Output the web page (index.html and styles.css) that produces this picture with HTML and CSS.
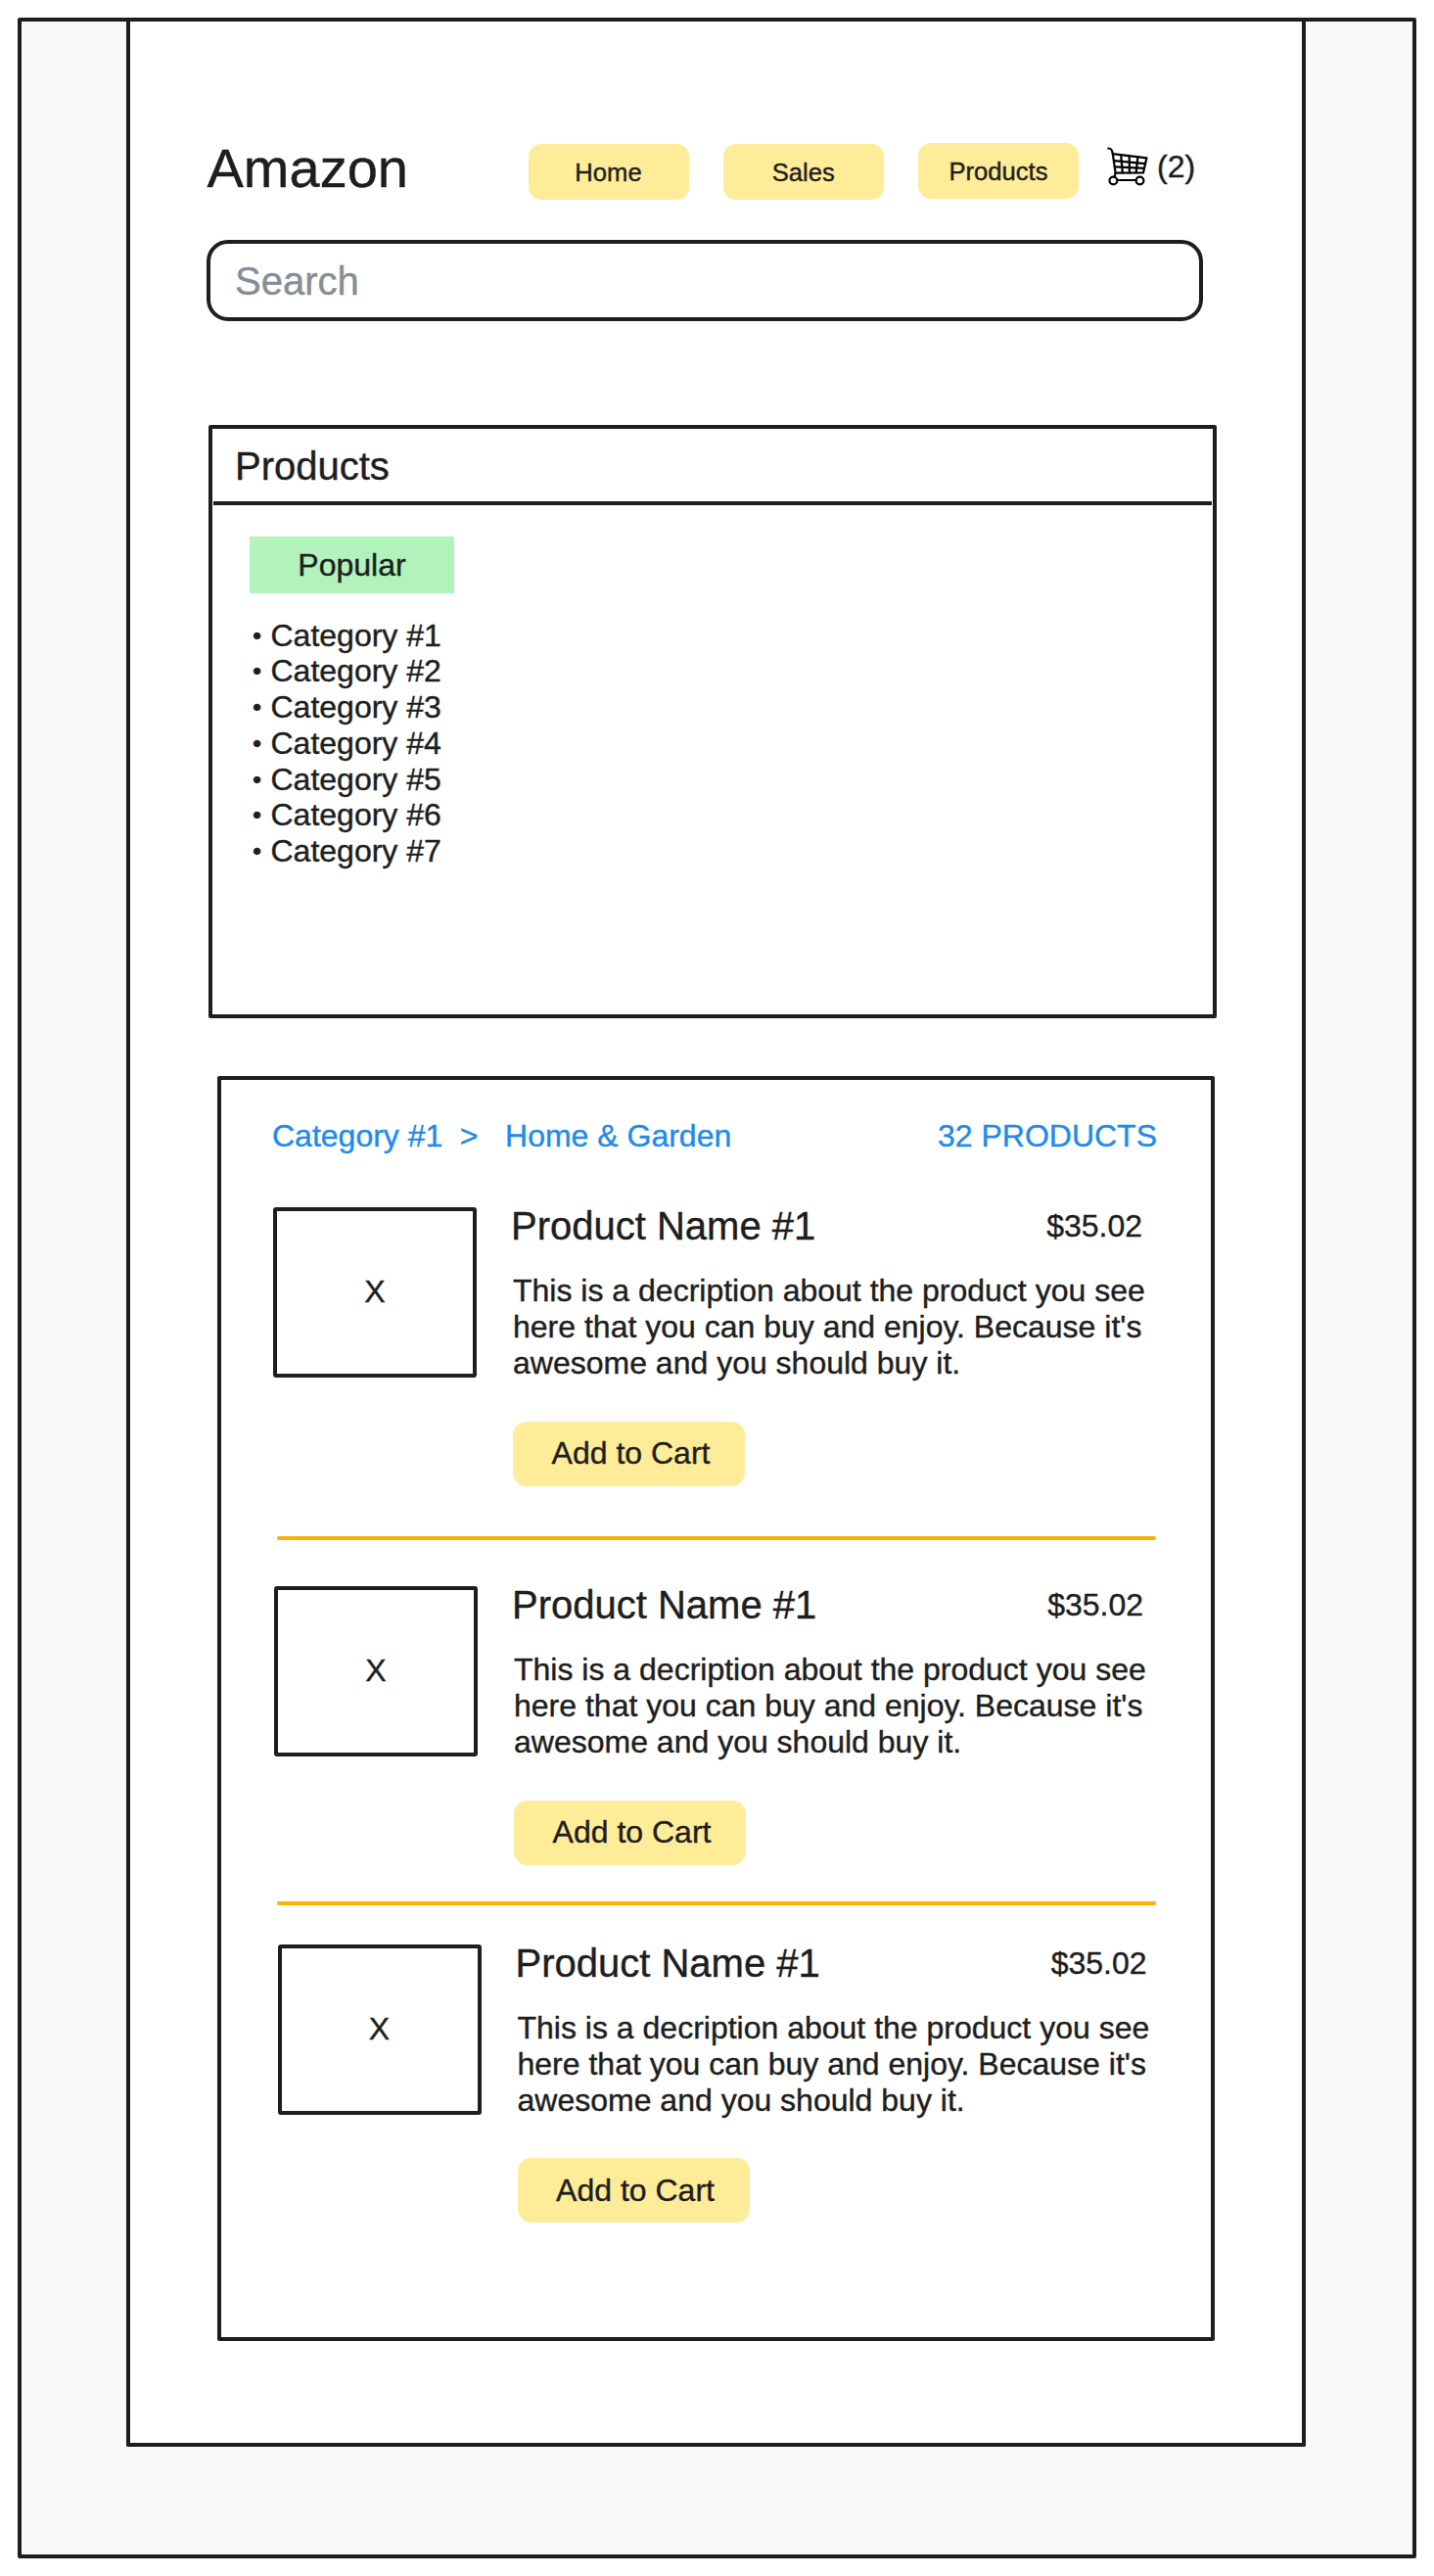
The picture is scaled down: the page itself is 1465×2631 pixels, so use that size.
FILE: index.html
```html
<!DOCTYPE html>
<html lang="en">
<head>
<meta charset="utf-8">
<title>Amazon</title>
<link rel="stylesheet" href="styles.css">
</head>
<body>
<div class="frame">
  <div class="page">
    <header class="header">
      <h1 class="brand">Amazon</h1>
      <nav class="nav">
        <a class="nav-link">Home</a>
        <a class="nav-link">Sales</a>
        <a class="nav-link nav-link-raised">Products</a>
      </nav>
      <div class="cart">
        <svg class="cart-icon" width="42" height="40" viewBox="0 0 42 40" fill="none" stroke="#000" stroke-width="2.2" stroke-linecap="round" stroke-linejoin="round">
          <path d="M1.2 1.5Q4 1.6 4.8 3.4L5.8 7L8.6 26.6L7.6 30.6"/>
          <path d="M5.8 7.2L40.4 11.4L37 26.4L8.6 26.6"/>
          <path d="M6.9 14.2L38.8 17.2M7.7 20.4L37.9 21.8"/>
          <path d="M14.2 8.4L15.8 26.4M22.7 9.4L22.9 26.4M31.4 10.4L29.6 26.4"/>
          <path d="M11 34H29.5" stroke-width="2"/>
          <circle cx="6.4" cy="34.5" r="3.9"/>
          <circle cx="33.5" cy="34.5" r="3.9"/>
        </svg>
        <span class="cart-count">(2)</span>
      </div>
    </header>

    <div class="search">Search</div>

    <section class="panel categories">
      <h2 class="categories-title">Products</h2>
      <div class="tag">Popular</div>
      <ul class="category-list">
        <li><span class="bullet">•</span>Category #1</li>
        <li><span class="bullet">•</span>Category #2</li>
        <li><span class="bullet">•</span>Category #3</li>
        <li><span class="bullet">•</span>Category #4</li>
        <li><span class="bullet">•</span>Category #5</li>
        <li><span class="bullet">•</span>Category #6</li>
        <li><span class="bullet">•</span>Category #7</li>
      </ul>
    </section>

    <section class="panel listing">
      <div class="listing-head">
        <span>Category #1</span>
        <span class="crumb-sep">&gt;</span>
        <span>Home &amp; Garden</span>
        <span class="listing-count">32 PRODUCTS</span>
      </div>

      <article class="item">
        <div class="thumb">X</div>
        <div class="item-body">
          <div class="item-head"><h3 class="item-name">Product Name #1</h3><span class="price">$35.02</span></div>
          <p class="item-text">This is a decription about the product you see<br>here that you can buy and enjoy. Because it's<br>awesome and you should buy it.</p>
          <button class="add">Add to Cart</button>
        </div>
      </article>
      <hr class="rule">
      <article class="item item-second">
        <div class="thumb">X</div>
        <div class="item-body">
          <div class="item-head"><h3 class="item-name">Product Name #1</h3><span class="price">$35.02</span></div>
          <p class="item-text">This is a decription about the product you see<br>here that you can buy and enjoy. Because it's<br>awesome and you should buy it.</p>
          <button class="add">Add to Cart</button>
        </div>
      </article>
      <hr class="rule rule-tight">
      <article class="item item-third">
        <div class="thumb">X</div>
        <div class="item-body">
          <div class="item-head"><h3 class="item-name">Product Name #1</h3><span class="price">$35.02</span></div>
          <p class="item-text">This is a decription about the product you see<br>here that you can buy and enjoy. Because it's<br>awesome and you should buy it.</p>
          <button class="add">Add to Cart</button>
        </div>
      </article>
    </section>
  </div>
</div>
</body>
</html>
```
FILE: styles.css
```css
* {
  box-sizing: border-box;
}

body {
  margin: 0;
  padding: 18px;
  background: #fff;
  color: #1e1e1e;
  font-family: "Liberation Sans", Arial, sans-serif;
  font-size: 32px;
  line-height: 1.15;
  -webkit-text-stroke: 0.4px currentColor;
}

h1, h2, h3, p, ul {
  margin: 0;
  padding: 0;
  font-weight: 400;
}

.frame {
  width: 1429px;
  height: 2595px;
  padding-left: 107px;
  border: 4px solid #1e1e1e;
  border-radius: 2px;
  background: #f8f9fb;
}

.page {
  width: 1205px;
  height: 2477px;
  padding: 118px 0 0 78px;
  border: 4px solid #1e1e1e;
  border-top: 0;
  border-radius: 0 0 2px 2px;
  background: #fff;
}

.header {
  display: flex;
  height: 64px;
}

.brand {
  width: 328px;
  margin-left: 0.5px;
  font-size: 56px;
  line-height: 64px;
}

.nav {
  display: flex;
  gap: 35.25px;
  padding-top: 7px;
}

.nav-link {
  width: 164px;
  height: 57px;
  border-radius: 13px;
  background: #ffec99;
  font-size: 25.6px;
  line-height: 58px;
  text-align: center;
}

.nav-link-raised {
  margin-top: -1px;
}

.cart {
  display: flex;
  margin-left: 29px;
}

.cart-icon {
  margin-top: 10px;
}

.cart-count {
  margin: 11.5px 0 0 9px;
}

.search {
  width: 1018px;
  height: 83px;
  margin-top: 41px;
  padding-left: 25px;
  border: 4px solid #1e1e1e;
  border-radius: 22px;
  color: #868e96;
  font-size: 40px;
  line-height: 77px;
}

.panel {
  border: 4px solid #1e1e1e;
  border-radius: 2px;
}

.categories {
  width: 1030px;
  height: 606px;
  margin: 106px 0 0 2px;
}

.categories-title {
  height: 78px;
  margin: 0 1px;
  padding: 15px 0 0 22px;
  border-bottom: 4px solid #1e1e1e;
  font-size: 40px;
}

.tag {
  width: 209px;
  height: 58px;
  margin: 32px 0 0 38px;
  background: #b2f2bb;
  line-height: 58px;
  text-align: center;
}

.category-list {
  margin: 24.5px 0 0 39px;
  list-style: none;
}

.bullet {
  display: inline-block;
  width: 13px;
  margin-right: 7.5px;
  font-size: 26px;
  line-height: 0;
  text-align: center;
  vertical-align: 2px;
}

.listing {
  width: 1019px;
  height: 1292px;
  margin: 59px 0 0 11px;
  padding: 38.5px 53px 0;
}

.listing-head {
  display: flex;
  width: 904px;
  margin-left: -1px;
  color: #228be6;
}

.crumb-sep {
  margin: 0 27.5px 0 17.5px;
}

.listing-count {
  margin-left: auto;
}

.item {
  display: flex;
  gap: 37px;
  width: 910px;
  margin-top: 51px;
}

.thumb {
  width: 208px;
  height: 174px;
  margin-top: 4px;
  border: 4px solid #1e1e1e;
  border-radius: 3px;
  line-height: 165px;
  text-align: center;
}

.item-head {
  display: flex;
  justify-content: space-between;
  width: 645px;
  margin-left: -2px;
}

.item-name {
  font-size: 40px;
}

.price {
  padding-top: 5px;
}

.item-text {
  margin-top: 25px;
  white-space: nowrap;
}

.add {
  display: block;
  width: 237px;
  height: 66px;
  margin-top: 41px;
  padding: 0 0 0 4px;
  border: 0;
  border-radius: 14px;
  background: #ffec99;
  color: inherit;
  font: inherit;
  text-align: center;
}

.rule {
  width: 898px;
  height: 4px;
  margin: 51px 0 0 4px;
  border: 0;
  border-radius: 2px;
  background: #fab005;
}

.item-second {
  margin: 43.5px 0 0 1px;
}

.rule-tight {
  margin-top: 37.5px;
}

.item-third {
  margin: 36px 0 0 4.5px;
}
```
